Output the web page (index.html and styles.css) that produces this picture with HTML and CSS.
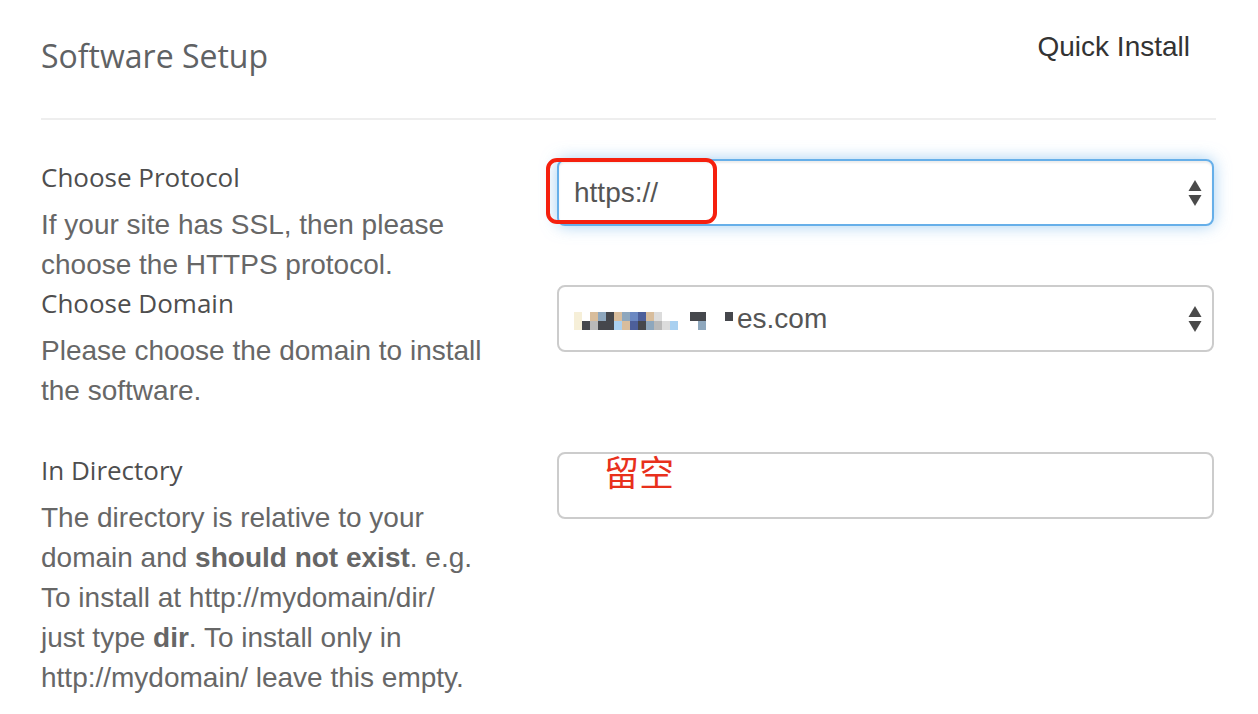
FILE: index.html
```html
<!DOCTYPE html>
<html>
<head>
  <meta charset="utf-8">
  <link rel="stylesheet" href="styles.css">
</head>
<body>
  <div class="setup-panel">
    <!-- Header -->
    <div class="panel-header">
      <h2 class="panel-title">Software Setup</h2>
      <span class="panel-link">Quick Install</span>
    </div>

    <!-- Protocol -->
    <div class="form-row">
      <div class="field-info">
        <label class="field-label">Choose Protocol</label>
        <p class="field-help">If your site has SSL, then please choose the HTTPS protocol.</p>
      </div>
      <div class="field-control">
        <div class="form-select is-focused">
          <span class="select-value">https://</span>
          <svg class="select-arrows" width="14" height="26" viewBox="0 0 14 26">
            <path d="M7 0 L13.5 11 L0.5 11 Z" fill="#4a4a4a"/>
            <path d="M0.5 15 L13.5 15 L7 26 Z" fill="#4a4a4a"/>
          </svg>
          <span class="mark-box"></span>
        </div>
      </div>
    </div>

    <!-- Domain -->
    <div class="form-row row-spaced">
      <div class="field-info">
        <label class="field-label">Choose Domain</label>
        <p class="field-help">Please choose the domain to install the software.</p>
      </div>
      <div class="field-control">
        <div class="form-select">
          <span class="select-value">
            <span class="mosaic">
              <span class="mosaic-col"><i class="c-cream"></i><i class="c-cream"></i></span>
              <span class="mosaic-col"><i></i><i class="c-dark"></i></span>
              <span class="mosaic-col"><i class="c-tan"></i><i class="c-grey"></i></span>
              <span class="mosaic-col"><i class="c-steel"></i><i class="c-dark"></i></span>
              <span class="mosaic-col"><i class="c-dark"></i><i class="c-dark"></i></span>
              <span class="mosaic-col"><i class="c-tan"></i><i class="c-sky"></i></span>
              <span class="mosaic-col"><i class="c-steel"></i><i class="c-tan"></i></span>
              <span class="mosaic-col"><i class="c-blue"></i><i class="c-navy"></i></span>
              <span class="mosaic-col"><i class="c-navy"></i><i class="c-dark"></i></span>
              <span class="mosaic-col"><i class="c-tan"></i><i class="c-steel"></i></span>
              <span class="mosaic-col"><i class="c-light"></i><i class="c-grey"></i></span>
              <span class="mosaic-col"><i></i><i class="c-light"></i></span>
              <span class="mosaic-col"><i></i><i class="c-sky"></i></span>
            </span>
            <span class="mosaic mosaic-gap">
              <span class="mosaic-col"><i class="c-dark"></i><i></i></span>
              <span class="mosaic-col"><i class="c-dark"></i><i class="c-steel"></i></span>
              <span class="mosaic-col mosaic-space"><i></i><i></i></span>
              <span class="mosaic-col"><i class="c-dark"></i><i></i></span>
            </span><span class="domain-tail">es.com</span>
          </span>
          <svg class="select-arrows" width="14" height="26" viewBox="0 0 14 26">
            <path d="M7 0 L13.5 11 L0.5 11 Z" fill="#4a4a4a"/>
            <path d="M0.5 15 L13.5 15 L7 26 Z" fill="#4a4a4a"/>
          </svg>
        </div>
      </div>
    </div>

    <!-- Directory -->
    <div class="form-row">
      <div class="field-info">
        <label class="field-label">In Directory</label>
        <p class="field-help">The directory is relative to your domain and <b>should not exist</b>. e.g. To install at http://mydomain/dir/ just type <b>dir</b>. To install only in http://mydomain/ leave this empty.</p>
      </div>
      <div class="field-control">
        <div class="form-input">
          <span class="note">留空</span>
        </div>
      </div>
    </div>
  </div>
</body>
</html>
```

FILE: styles.css
```css
* {
  margin: 0;
  padding: 0;
  box-sizing: border-box;
}

body {
  background: #fff;
  font-family: "Liberation Sans", Arial, sans-serif;
  color: #666;
}

.setup-panel {
  padding: 0 42px 0 41px;
}

/* Header */
.panel-header {
  display: flex;
  justify-content: space-between;
  align-items: flex-start;
  padding-top: 34px;
  padding-bottom: 40px;
  border-bottom: 2px solid #eee;
}

.panel-title {
  font-family: "Open Sans", sans-serif;
  font-size: 32px;
  font-weight: 400;
  line-height: 44px;
  color: #5f6264;
}

.panel-link {
  font-size: 28px;
  line-height: 32px;
  color: #333;
  margin-top: -3px;
  margin-right: 26px;
}

/* Form rows */
.form-row {
  display: grid;
  grid-template-columns: 443px 1fr;
  column-gap: 73px;
}

.panel-header + .form-row {
  margin-top: 39px;
}

.row-spaced {
  margin-bottom: 41px;
}

.field-label {
  display: block;
  font-family: "Open Sans", sans-serif;
  font-size: 26px;
  line-height: 36px;
  color: #4e4e4e;
}

.field-help {
  font-size: 28px;
  line-height: 40px;
  margin-top: 10px;
  color: #676767;
}

.field-help b {
  color: #666;
}

/* Controls */
.form-select,
.form-input {
  position: relative;
  height: 67px;
  border: 2px solid #ccc;
  border-radius: 8px;
  background: #fff;
  display: flex;
  align-items: center;
  padding: 0 10px 0 15px;
  margin-right: 2px;
  font-size: 28px;
  color: #555;
}

.form-select {
  justify-content: space-between;
}

.form-select.is-focused {
  border-color: #66afe9;
  box-shadow: inset 0 2px 2px rgba(0, 0, 0, 0.075),
              0 0 16px rgba(102, 175, 233, 0.6);
}

.select-value {
  display: flex;
  align-items: center;
}

.select-arrows {
  display: block;
}

/* red annotation */
.mark-box {
  position: absolute;
  left: -13px;
  top: -3px;
  width: 171px;
  height: 66px;
  border: 4px solid #f5200e;
  border-radius: 11px;
}

.note {
  position: absolute;
  left: 45px;
  top: -3px;
  font-family: "Noto Sans CJK SC", sans-serif;
  font-size: 35px;
  line-height: 40px;
  color: #e8301c;
}

/* blurred domain name */
.mosaic {
  display: flex;
  margin-top: 4px;
}

.mosaic-gap {
  margin-left: 12px;
}

.mosaic-col {
  display: flex;
  flex-direction: column;
}

.mosaic-col i {
  display: block;
  width: 8px;
  height: 9px;
}

.mosaic-space i {
  width: 19px;
}

.c-cream { background: #f6efd8; }
.c-dark { background: #45474c; }
.c-tan { background: #d8bd9c; }
.c-steel { background: #8ea7bd; }
.c-sky { background: #a9d0f0; }
.c-blue { background: #6b88c2; }
.c-navy { background: #4d5f9a; }
.c-grey { background: #b9b9b9; }
.c-light { background: #dcdcdc; }

.domain-tail {
  margin-left: 4px;
}
```
